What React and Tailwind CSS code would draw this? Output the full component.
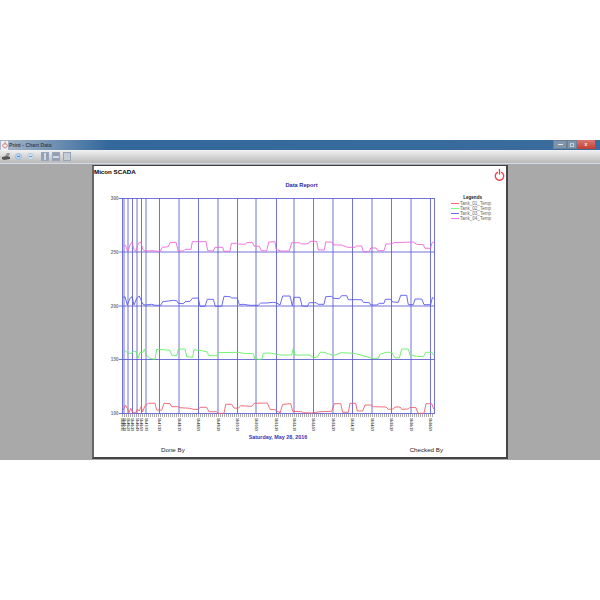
const xLeft = (px) => 110 + px / 3;
const xRight = (px) => 280 + px / 3;

// traced from the report, [x, y] in 3x crop coordinates
const toLine = (top, left, right) =>
  [
    ...left.map(([x, y]) => [xLeft(x), top + y / 3]),
    ...right.map(([x, y]) => [xRight(x), top + y / 3]),
  ]
    .map(([x, y]) => `${x.toFixed(1)},${y.toFixed(1)}`)
    .join(" ");

const series = [
  {
    name: "Tank_04_Temp",
    color: "#ee66dd",
    points: toLine(
      190,
      [[40,165],[47,167],[53,185],[60,165],[66,156],[72,180],[78,183],[85,160],[93,156],[98,178],[105,183],[130,182],[150,185],[157,172],[175,170],[180,158],[198,157],[205,183],[220,183],[225,178],[243,178],[247,155],[288,155],[293,182],[310,183],[315,172],[338,172],[342,184],[360,184],[364,160],[380,160],[385,162],[405,163],[410,158],[427,157],[432,168],[448,169],[454,182],[470,183],[476,156],[495,155],[498,178],[510,182]],
      [[0,183],[28,183],[35,158],[58,158],[65,162],[85,161],[90,154],[110,154],[115,180],[133,180],[137,156],[155,156],[160,165],[185,165],[203,172],[225,172],[230,168],[245,168],[250,185],[268,185],[272,174],[288,174],[293,182],[312,182],[318,162],[335,162],[340,158],[400,156],[410,163],[430,164],[435,175],[451,175],[457,157],[461,157]]
    ),
  },
  {
    name: "Tank_03_Temp",
    color: "#5a5aee",
    points: toLine(
      190,
      [[40,322],[45,320],[52,345],[60,325],[66,320],[72,345],[80,325],[88,318],[98,342],[105,345],[125,343],[135,346],[152,346],[158,335],[175,333],[190,331],[200,332],[205,340],[220,341],[225,335],[240,334],[247,325],[265,324],[270,349],[285,349],[292,328],[310,328],[316,349],[335,349],[342,319],[360,320],[365,324],[382,324],[388,344],[400,343],[420,346],[445,346],[452,339],[470,339],[490,337],[500,339],[510,345]],
      [[0,345],[8,318],[30,318],[37,347],[42,322],[60,322],[66,348],[82,349],[88,338],[108,338],[115,343],[132,343],[137,320],[155,319],[160,325],[178,326],[185,317],[200,317],[205,329],[245,329],[250,337],[268,338],[272,345],[290,345],[298,340],[312,340],[316,328],[332,328],[338,336],[355,337],[362,316],[380,316],[385,344],[400,344],[405,327],[425,327],[432,344],[452,344],[457,323],[461,325]]
    ),
  },
  {
    name: "Tank_02_Temp",
    color: "#66ee66",
    points: toLine(
      315,
      [[40,105],[47,108],[53,115],[65,115],[70,108],[78,110],[84,130],[90,112],[98,112],[103,103],[110,122],[120,130],[135,133],[140,103],[160,104],[180,106],[185,120],[200,122],[205,102],[225,102],[230,125],[248,127],[252,104],[275,107],[290,110],[297,122],[320,122],[324,113],[385,112],[400,115],[430,116],[435,132],[455,133],[460,115],[480,114],[500,118],[510,120]],
      [[0,120],[35,120],[40,100],[45,120],[90,120],[100,128],[113,126],[120,112],[135,112],[140,115],[158,121],[165,120],[183,113],[205,114],[222,115],[250,122],[275,130],[295,130],[300,118],[318,112],[335,112],[345,128],[358,129],[365,102],[385,102],[390,120],[410,124],[430,125],[437,112],[455,112],[461,122]]
    ),
  },
  {
    name: "Tank_01_Temp",
    color: "#ee6070",
    points: toLine(
      315,
      [[40,285],[46,270],[52,280],[57,293],[62,280],[68,293],[78,293],[82,282],[88,288],[93,275],[98,290],[105,272],[115,265],[135,265],[140,285],[155,286],[162,265],[180,266],[185,275],[205,275],[210,278],[240,280],[250,283],[265,283],[270,277],[290,277],[297,290],[320,290],[325,295],[342,295],[347,268],[365,268],[372,279],[385,280],[392,272],[425,274],[433,265],[472,264],[480,283],[495,284],[500,289],[510,292]],
      [[0,294],[8,268],[32,266],[38,289],[65,290],[70,293],[95,294],[120,290],[155,289],[163,266],[182,266],[188,292],[205,292],[210,265],[227,265],[232,288],[248,288],[255,270],[272,270],[280,275],[318,276],[325,283],[340,282],[345,276],[360,276],[365,283],[385,282],[390,277],[408,278],[414,295],[432,295],[438,266],[455,266],[461,282]]
    ),
  },
];

const legend = [
  { name: "Tank_01_Temp", bar: "bg-[#f06a6a]" },
  { name: "Tank_02_Temp", bar: "bg-[#80ff80]" },
  { name: "Tank_03_Temp", bar: "bg-[#6a6af0]" },
  { name: "Tank_04_Temp", bar: "bg-[#ff70ff]" },
];

const gridX = [122.5, 124, 128, 132.5, 137, 141.5, 146, 159.5, 179, 198.5, 218, 237.5, 256, 276.5, 294, 313.5, 333, 352.5, 372, 391.5, 411, 430.5, 434.5];
const times = ["16:46:01", "16:46:10", "16:46:20", "16:46:30", "16:46:40", "16:46:50", "16:47:00", "16:47:30", "16:48:10", "16:48:50", "16:49:30", "16:50:10", "16:50:50", "16:51:30", "16:52:10", "16:52:50", "16:53:30", "16:54:10", "16:54:50", "16:55:30", "16:56:10", "16:56:50"];
const gridY = [
  { y: 198.5, label: "300" },
  { y: 252, label: "250" },
  { y: 306, label: "200" },
  { y: 359.5, label: "150" },
  { y: 413.5, label: "100" },
];

const PowerIcon = ({ className }) => (
  <svg viewBox="0 0 12 14" className={className} fill="none" stroke="currentColor" strokeWidth="1.5" strokeLinecap="round">
    <path d="M3.7 4.2a4.6 4.6 0 1 0 4.6 0" />
    <path d="M6 1v5" />
  </svg>
);

const Chart = () => (
  <svg viewBox="94 186 347 246" className="block w-[347px] h-[246px]">
    {gridY.map((g) => (
      <g key={g.label}>
        <line x1="119" x2="434.5" y1={g.y} y2={g.y} stroke="#5a5ad0" strokeOpacity="0.85" />
        <text x="118.5" y={g.y + 1.6} textAnchor="end" className="text-[4.6px] font-bold fill-[#777]">
          {g.label}
        </text>
      </g>
    ))}
    {gridX.map((x) => (
      <line key={x} x1={x} x2={x} y1="198" y2="414" stroke="#5a5ad0" strokeOpacity="0.85" />
    ))}
    <line x1="122" x2="434" y1="415.5" y2="415.5" stroke="#aaa" strokeWidth="3" strokeDasharray="1 1" />
    {series.map((s) => (
      <polyline key={s.name} points={s.points} fill="none" stroke={s.color} strokeWidth="0.9" strokeLinejoin="round" />
    ))}
    {gridX.slice(0, 22).map((x, i) => (
      <text key={x} transform={`translate(${Math.floor(x) - 1} 418) rotate(90)`} className="text-[3.2px] font-bold fill-[#444]">
        {times[i]}
      </text>
    ))}
  </svg>
);

export default function App() {
  return (
    <div className="w-[600px] h-[600px] bg-white pt-[140px] flex flex-col font-['Liberation_Sans',Arial,sans-serif] overflow-hidden">
      {/* title bar */}
      <div className="h-[10px] flex items-start justify-between bg-gradient-to-r from-[#a9b9c9] via-[#33689c] via-[18%] to-[#3a6c9d]">
        <div className="flex items-center h-[10px] pl-[1px] gap-[1px]">
          <span className="w-[7px] h-[9px] bg-white/80 flex items-center justify-center">
            <PowerIcon className="w-[6px] h-[8px] text-[#d9535a]" />
          </span>
          <span className="text-[5.2px] leading-[10px] font-bold text-[#444]">Print - Chart Data</span>
        </div>
        <div className="flex h-[9px] mr-[5px]">
          <div className="w-[14px] bg-[#7f95ab] border border-[#6a8098] flex items-center justify-center">
            <span className="w-[5px] h-[1px] bg-[#e6e6e6]" />
          </div>
          <div className="w-[10px] bg-[#7f95ab] border border-[#6a8098] flex items-center justify-center">
            <span className="w-[4px] h-[4px] border border-[#c8ced8]" />
          </div>
          <div className="w-[18px] bg-gradient-to-b from-[#d9786f] to-[#c23c32] flex items-center justify-center text-[#eee] text-[5px] leading-none font-bold">
            x
          </div>
        </div>
      </div>

      {/* toolbar */}
      <div className="h-[14px] flex items-center bg-gradient-to-b from-[#f2f2f2] to-[#b9b9b9] border-b border-[#d4dce4]">
        <svg viewBox="0 0 8 7" className="w-[8px] h-[7px] ml-[2px]">
          <path d="M0 4l5-1 3 1v2l-6 1-2-1z" fill="#555" />
          <path d="M3 3l2-3h3l-1 3z" fill="#999" />
        </svg>
        <span className="w-[7px] h-[7px] rounded-full bg-[#b8d2ee] border border-[#9dbde0] ml-[5px] flex items-center justify-center">
          <span className="w-[3px] h-[1px] bg-[#5b8fc8]" />
        </span>
        <span className="w-[7px] h-[7px] rounded-full bg-[#cfdfee] border border-[#adc6de] ml-[5px] flex items-center justify-center">
          <span className="w-[3px] h-[1px] bg-[#6f9bc8]" />
        </span>
        <span className="w-[8px] h-[9px] bg-[#93a0b3] border border-[#98a5b8] ml-[7px] flex justify-center">
          <span className="w-[2px] h-full bg-[#d3d9e2]" />
        </span>
        <span className="w-[8px] h-[9px] bg-[#93a0b3] border border-[#98a5b8] ml-[3px] flex items-center">
          <span className="w-full h-[2px] bg-[#d3d9e2]" />
        </span>
        <span className="w-[8px] h-[9px] bg-[#c8cdd5] border border-[#98a5b8] ml-[3px]" />
      </div>

      {/* preview area */}
      <div className="h-[296px] bg-[#a9a9a9] pl-[92px] pt-[1px]">
        <div className="w-[416px] h-[294px] bg-white border-t border-t-[#444] border-l-2 border-l-[#666] border-r-2 border-r-[#444] border-b-2 border-b-[#444] flex flex-col">
          <div className="h-[20px] flex justify-between pr-[1px]">
            <div className="text-[6.2px] font-bold leading-[11px] text-black">Micon SCADA</div>
            <PowerIcon className="w-[11px] h-[14px] mt-[2px] text-[#e4454c]" />
          </div>
          <div className="h-[0px] flex justify-center pl-[3px]">
            <div className="text-[5.7px] font-bold leading-[8px] -mt-[5px] text-[#2a2aa6]">Data Report</div>
          </div>
          <div className="flex">
            <Chart />
            <div className="ml-[10px] mt-[9px] flex flex-col">
              <div className="text-[4.6px] font-bold leading-[6px] text-[#222] text-center pl-[3px]">Legends</div>
              <div className="flex flex-col">
                {legend.map((l) => (
                  <div key={l.name} className="flex items-center h-[5px]">
                    <span className={`w-[8px] h-[1px] mr-[1px] ${l.bar}`} />
                    <span className="text-[4.6px] leading-[5px] text-[#666]">{l.name}</span>
                  </div>
                ))}
              </div>
            </div>
          </div>
          <div className="w-[347px] flex justify-center pl-[21px] text-[5.4px] font-bold leading-[10px] text-[#3232b4]">
            Saturday, May 28, 2016
          </div>
          <div className="flex justify-between pl-[67px] pr-[63px] mt-[4px] text-[6.2px] leading-[8px] font-medium text-[#222]">
            <span>Done By</span>
            <span>Checked By</span>
          </div>
        </div>
      </div>
    </div>
  );
}
